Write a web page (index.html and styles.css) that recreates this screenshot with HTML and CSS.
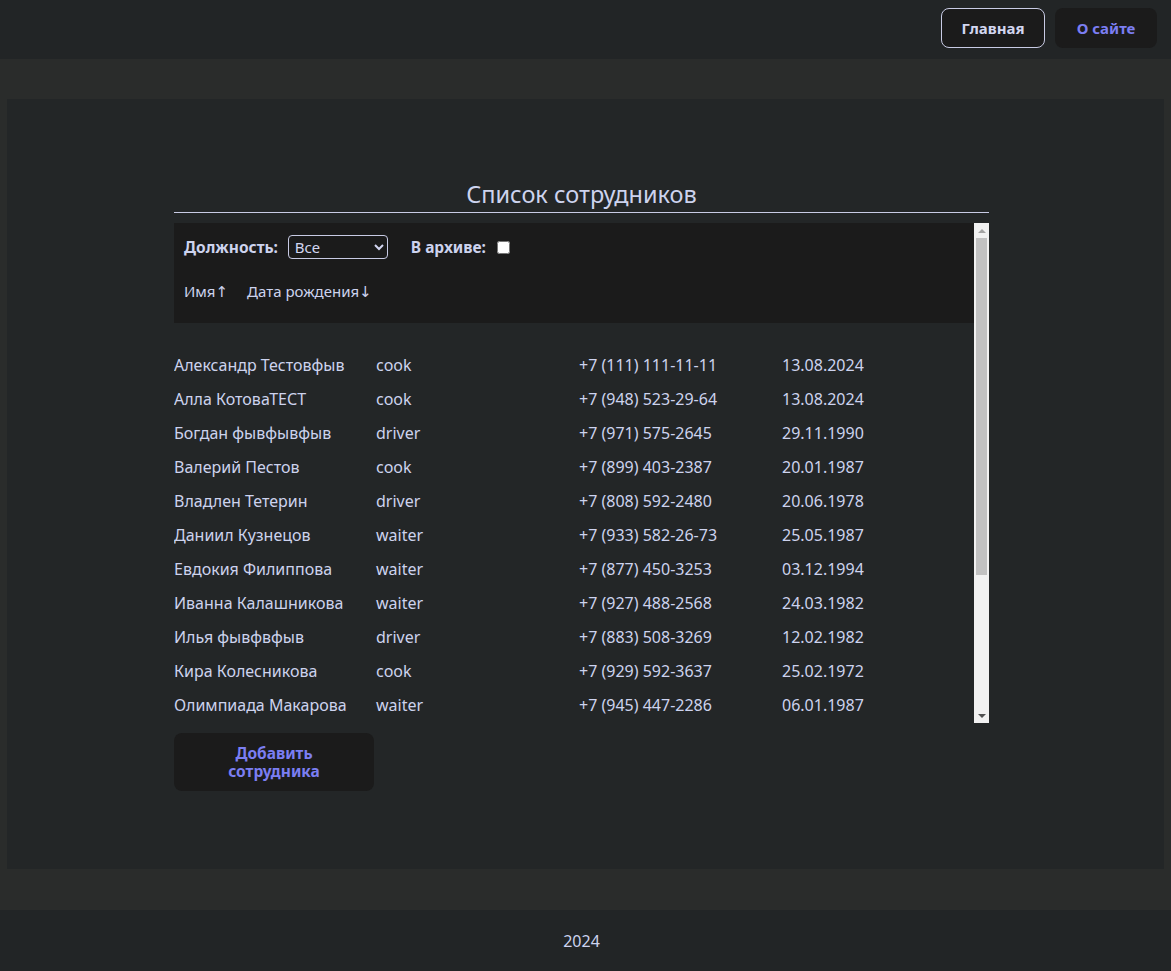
FILE: index.html
```html
<!DOCTYPE html>
<html lang="ru">
<head>
<meta charset="utf-8">
<title>Список сотрудников</title>
<link rel="stylesheet" href="styles.css">
</head>
<body>
<header class="topbar">
  <nav class="nav">
    <a class="nav-btn nav-btn--active" href="#">Главная</a>
    <a class="nav-btn nav-btn--link" href="#">О сайте</a>
  </nav>
</header>
<main class="main">
  <section class="panel">
    <div class="content">
      <h1 class="title">Список сотрудников</h1>
      <div class="table-box">
        <div class="table-scroll">
          <div class="toolbar">
            <div class="filters">
              <label class="filter">Должность:
                <select class="select">
                  <option>Все</option>
                  <option>cook</option>
                  <option>driver</option>
                  <option>waiter</option>
                </select>
              </label>
              <label class="filter filter--archive">В архиве:
                <input type="checkbox" class="check">
              </label>
            </div>
            <div class="sorts">
              <span class="sort">Имя↑</span>
              <span class="sort">Дата рождения↓</span>
            </div>
          </div>
          <div class="rows">
            <div class="row"><span>Александр Тестовфыв</span><span>cook</span><span>+7 (111) 111-11-11</span><span>13.08.2024</span></div>
            <div class="row"><span>Алла КотоваТЕСТ</span><span>cook</span><span>+7 (948) 523-29-64</span><span>13.08.2024</span></div>
            <div class="row"><span>Богдан фывфывфыв</span><span>driver</span><span>+7 (971) 575-2645</span><span>29.11.1990</span></div>
            <div class="row"><span>Валерий Пестов</span><span>cook</span><span>+7 (899) 403-2387</span><span>20.01.1987</span></div>
            <div class="row"><span>Владлен Тетерин</span><span>driver</span><span>+7 (808) 592-2480</span><span>20.06.1978</span></div>
            <div class="row"><span>Даниил Кузнецов</span><span>waiter</span><span>+7 (933) 582-26-73</span><span>25.05.1987</span></div>
            <div class="row"><span>Евдокия Филиппова</span><span>waiter</span><span>+7 (877) 450-3253</span><span>03.12.1994</span></div>
            <div class="row"><span>Иванна Калашникова</span><span>waiter</span><span>+7 (927) 488-2568</span><span>24.03.1982</span></div>
            <div class="row"><span>Илья фывфвфыв</span><span>driver</span><span>+7 (883) 508-3269</span><span>12.02.1982</span></div>
            <div class="row"><span>Кира Колесникова</span><span>cook</span><span>+7 (929) 592-3637</span><span>25.02.1972</span></div>
            <div class="row"><span>Олимпиада Макарова</span><span>waiter</span><span>+7 (945) 447-2286</span><span>06.01.1987</span></div>
          </div>
        </div>
        <div class="scrollbar" aria-hidden="true">
          <div class="sb-btn"><svg width="8" height="4" viewBox="0 0 8 4"><polygon points="0,4 4,0 8,4" fill="#a3a3a3"/></svg></div>
          <div class="sb-track"><div class="sb-thumb"></div></div>
          <div class="sb-btn"><svg width="8" height="4" viewBox="0 0 8 4"><polygon points="0,0 8,0 4,4" fill="#505050"/></svg></div>
        </div>
      </div>
      <button class="add-btn" type="button"><span class="add-line">Добавить</span><span class="add-line">сотрудника</span></button>
    </div>
  </section>
</main>
<footer class="footer">2024</footer>
</body>
</html>
```

FILE: styles.css
```css
* { box-sizing: border-box; }

html, body {
  margin: 0;
  padding: 0;
}

body {
  background: #2a2c2b;
  color: #cdd3ee;
  font-family: "Noto Sans", "DejaVu Sans", sans-serif;
  font-size: 16px;
}

.topbar {
  height: 59px;
  background: #222526;
  display: flex;
  justify-content: flex-end;
  align-items: flex-start;
  padding: 8px 14px 0 0;
}

.nav {
  display: flex;
  gap: 10px;
}

.nav-btn {
  display: flex;
  align-items: center;
  justify-content: center;
  height: 40px;
  border-radius: 8px;
  background: #1b1b1b;
  font-weight: 700;
  font-size: 15px;
  text-decoration: none;
}

.nav-btn--active {
  width: 104px;
  border: 1px solid #c8cbe4;
  color: #d2d6f0;
}

.nav-btn--link {
  width: 102px;
  color: #7b7ef2;
}

.main {
  padding: 40px 7px 41px 7px;
}

.panel {
  background: #232627;
  height: 770px;
  padding-top: 79px;
}

.content {
  width: 815px;
  margin-left: 167px;
}

.title {
  margin: 0;
  text-align: center;
  font-weight: 400;
  font-size: 23.5px;
  line-height: 32px;
  padding-bottom: 2px;
  border-bottom: 1px solid #c8cbe4;
  color: #cdd3ee;
}

.table-box {
  margin-top: 10px;
  height: 500px;
  display: flex;
}

.table-scroll {
  flex: 1;
  overflow: hidden;
}

.scrollbar {
  width: 15px;
  background: #f1f1f1;
  display: flex;
  flex-direction: column;
}

.sb-btn {
  height: 15px;
  display: flex;
  align-items: center;
  justify-content: center;
}

.sb-btn svg {
  display: block;
}

.sb-track {
  flex: 1;
  padding: 0 2px;
}

.sb-thumb {
  height: 337px;
  background: #c1c1c1;
}

.toolbar {
  background: #1b1b1b;
  height: 100px;
  padding: 13px 10px 0 10px;
}

.filters {
  display: flex;
  align-items: center;
  gap: 23px;
  height: 22px;
}

.filter {
  display: flex;
  align-items: center;
  gap: 10px;
  font-weight: 700;
  font-size: 15.5px;
}

.filter--archive {
  gap: 11px;
}

.select {
  width: 100px;
  background: transparent;
  color: #d2d6f0;
  border: 1px solid #c8cbe4;
  border-radius: 4px;
  font-family: "Noto Sans", "DejaVu Sans", sans-serif;
  font-size: 15px;
  line-height: normal;
  padding: 0 2px;
  color-scheme: dark;
}

.check {
  margin: 0;
  width: 13px;
  height: 13px;
}

.sorts {
  display: flex;
  gap: 19px;
  margin-top: 23px;
  font-size: 15px;
}

.rows {
  padding-top: 25px;
}

.row {
  display: grid;
  grid-template-columns: 202px 203px 203px 192px;
  height: 34px;
  align-items: center;
  font-size: 16px;
  white-space: nowrap;
}

.add-btn {
  display: flex;
  flex-direction: column;
  align-items: center;
  justify-content: center;
  margin-top: 10px;
  width: 200px;
  height: 58px;
  border: none;
  border-radius: 8px;
  background: #1b1b1b;
  color: #7b7ef2;
  font-family: "Noto Sans", "DejaVu Sans", sans-serif;
  font-weight: 700;
  font-size: 15.5px;
  line-height: 18px;
}

.footer {
  height: 61px;
  background: #222526;
  display: flex;
  align-items: center;
  justify-content: center;
  padding-right: 8px;
  font-size: 16px;
}
```
